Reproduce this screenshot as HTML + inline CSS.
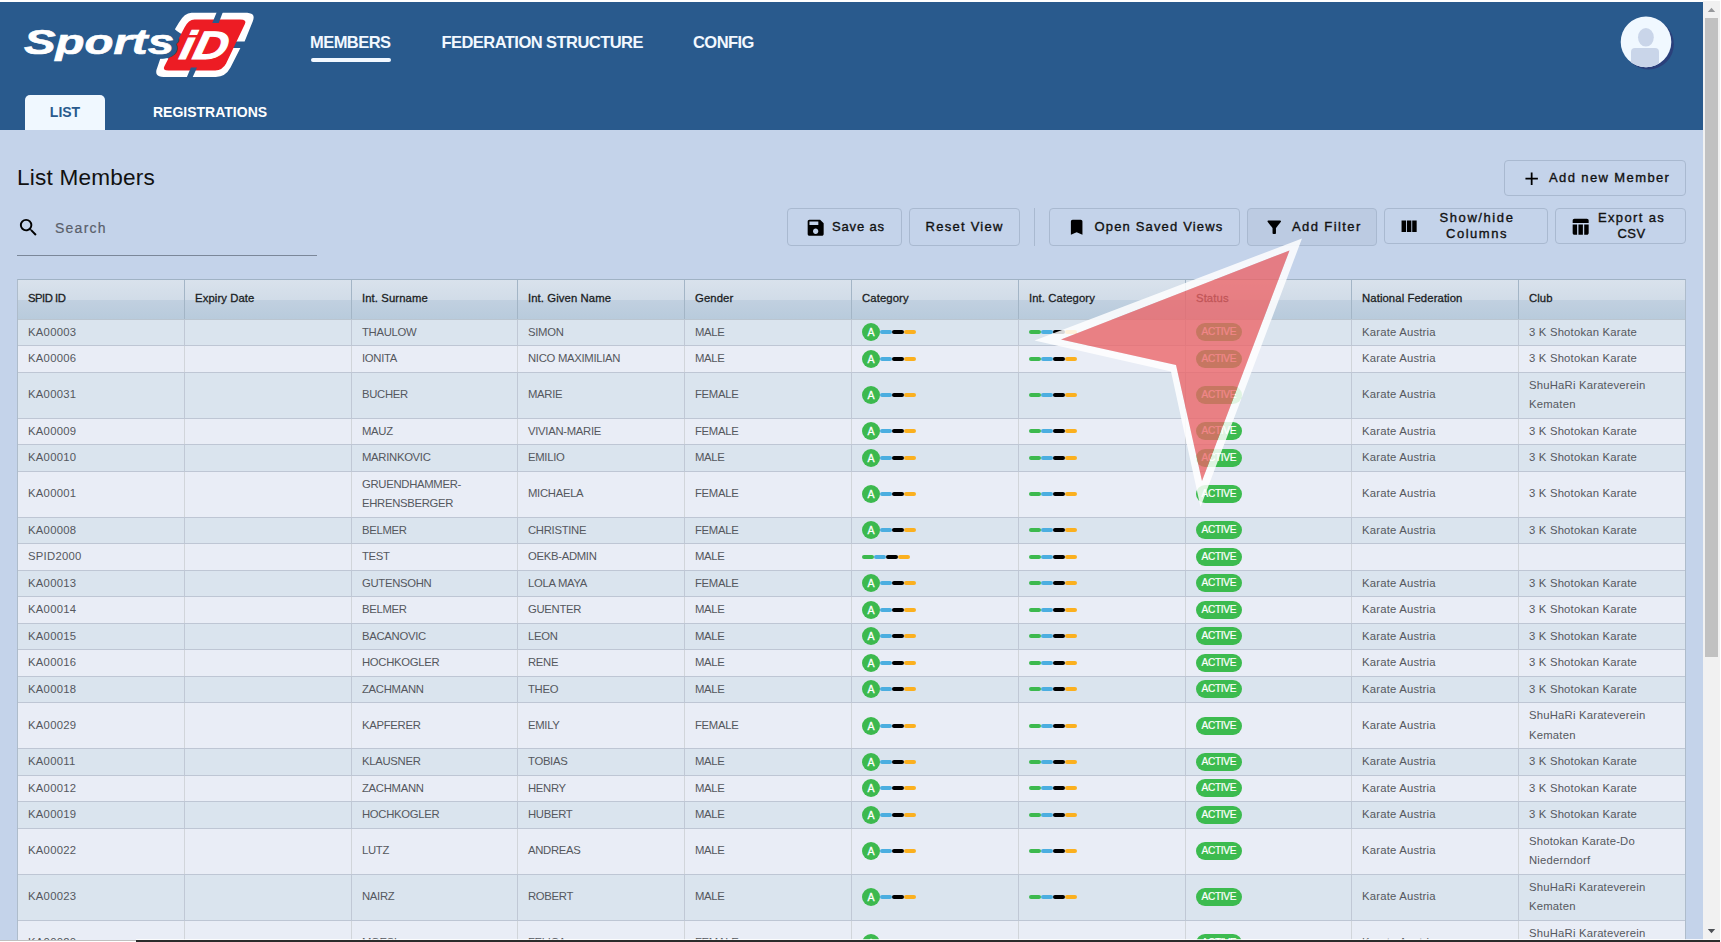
<!DOCTYPE html>
<html lang="en">
<head>
<meta charset="utf-8">
<title>List Members</title>
<style>
*{box-sizing:border-box}
html,body{margin:0;padding:0}
body{width:1721px;height:942px;overflow:hidden;position:relative;background:#c4d3ea;font-family:"Liberation Sans",sans-serif;color:#111}
.abs{position:absolute}
#topline{left:0;top:0;width:1721px;height:2px;background:#fff}
#hdr{left:0;top:2px;width:1703px;height:128px;background:#295a8d}
.nav{position:absolute;top:32px;height:20px;line-height:20px;color:#f2f8ff;font-weight:bold;font-size:16.5px;letter-spacing:-.55px;white-space:nowrap}
#ul{left:311px;top:58px;width:80px;height:4px;border-radius:2px;background:#f2f8ff}
#tab{left:25px;top:95px;width:80px;height:35px;background:#f0f8ff;border-radius:5px 5px 0 0;color:#295a8d;font-weight:bold;font-size:14px;text-align:center;line-height:35px}
#tab2{left:153px;top:95px;height:35px;line-height:35px;color:#fff;font-weight:bold;font-size:14px;white-space:nowrap}
#title{left:17px;top:161px;font-size:22.6px;line-height:34px;color:#111;letter-spacing:.2px;white-space:nowrap}
#search{left:55px;top:218px;font-size:14px;line-height:20px;color:#5a606a;letter-spacing:1.25px;-webkit-text-stroke:.2px #5a606a}
#sline{left:17px;top:255px;width:300px;height:1px;background:#7b8799}
.btn{position:absolute;border:1px solid #a9b9d0;border-radius:4px;color:#111;font-weight:normal;font-size:13px;white-space:nowrap;-webkit-text-stroke:.35px #111}
.btn b{font-weight:normal}
.btn span{position:absolute;display:block;text-align:center}
.btn svg{position:absolute}
#div1{left:1034px;top:208px;width:1px;height:38px;background:#a9b9d0}
/* table */
#tbl{left:17px;top:279px;width:1669px;height:700px;border:1px solid #aebccb;border-top-color:#a0b2c4;background:#e9edf6;overflow:hidden}
#thead{position:absolute;left:0;top:0;width:1667px;height:40px;border-bottom:1px solid #bac5d0;background:linear-gradient(#d9e2ec 0,#d1dce8 52%,#c1d0e0 52%,#b8cbdc 100%)}
.r{position:absolute;left:0;width:1667px;border-bottom:1px solid #bec6d4}
.r.o{background:#dae4ee}
.r.e{background:#e9edf6}
.c{position:absolute;top:0;height:100%;display:flex;align-items:center;padding-left:10px;border-left:1px solid #c0c8d5;font-size:11.3px;line-height:19.5px;color:#55585e;white-space:nowrap}
.r.s .c{padding-bottom:2px}
.r.s26 .c.d,.r.s26 .c.u,.r.s26 .c.m{padding-bottom:0}
.r.e .c{border-left-color:#d1d5da}
.tl{line-height:19px;position:relative;top:.5px}
.tl2{line-height:20px;position:relative;top:-.5px}
.c.u{letter-spacing:-.3px}.c.m{letter-spacing:.2px}.c.d{letter-spacing:.27px}
.c.h{font-size:11.3px;color:#1b1e24;height:39px;padding-bottom:1px;border-left-color:#a3b5c6;letter-spacing:.1px;-webkit-text-stroke:.3px #1b1e24}
.c.h0{letter-spacing:-.5px}
.vl{position:absolute;top:0;width:1px;height:700px;background:#b9c4d1}
.cat{display:flex;align-items:center}
.cat i{display:block;font-style:normal}
.ca{width:18px;height:18px;border-radius:9px;background:#3cb94e;color:#fff;font-size:10.5px;line-height:18px;text-align:center;-webkit-text-stroke:.3px #fff}
.b{width:12px;height:4px;border-radius:2px}
.gr{background:#3cb94e}.bl{background:#4baee0}.bk{background:#000}.or{background:#fbb01f}
.act{display:block;width:46px;height:18px;border-radius:9px;background:#3cbb4f;color:#fff;font-size:10.1px;line-height:17px;text-align:center;-webkit-text-stroke:.2px #fff;letter-spacing:-.3px;text-indent:-.3px}
/* scrollbar */
#sb{left:1703px;top:1px;width:17px;height:939px;background:#f1f1f1}
#sbr{left:1720px;top:0;width:1px;height:942px;background:#fff}
#thumb{left:1705px;top:18px;width:13px;height:639px;background:#c1c1c1}
#bot1{left:0;top:940px;width:136px;height:1px;background:#c0c0c0}
#bot2{left:0;top:941px;width:136px;height:1px;background:#fff}
#bot3{left:136px;top:940px;width:1584px;height:2px;background:#2b2b2b}
#bot4{left:136px;top:939px;width:1584px;height:1px;background:rgba(255,255,255,.8)}
</style>
</head>
<body>
<div class="abs" id="hdr"></div>
<div class="abs" id="topline"></div>

<!-- LOGO -->
<svg class="abs" style="left:0;top:2px" width="300" height="92" viewBox="0 2 300 92">
  <path fill="#fff" d="M174.900,29.300 L178.800,22.700 Q184.500,13 191.500,12.800 L244.500,12.800 C252.500,12.800 255.400,14.800 252.700,21.500 L244.600,41.600 L230,41.600 L187,36 Q179.500,34 174.900,29.300 Z"/>
  <path fill="#fff" d="M161.500,55 L157.300,67.500 Q153.400,76.900 163.500,76.900 L215.800,76.900 Q225.500,76.900 230.500,67.500 L240.400,48 L228,48 L222,62 L171,60 Z"/>
  <path fill="#ed1c24" d="M194.500,19.400 L240.100,19.400 Q247.200,19.400 244.900,24 L226.100,63.600 Q222.500,70.400 215.200,70.400 L168.500,70.400 Q162.100,70.400 164.400,66.200 L184.500,27.500 Q188.500,19.400 194.500,19.400 Z"/>
  <polygon fill="#295a8d" points="217.200,11 223.300,11 218.700,23 212.300,23"/>
  <polygon fill="#295a8d" points="190.900,67.500 197,67.500 192.300,78 186.500,78"/>
  <text x="24" y="54" font-family="'Liberation Sans',sans-serif" font-weight="bold" font-style="italic" font-size="35" textLength="150" lengthAdjust="spacingAndGlyphs" fill="none" stroke="#295a8d" stroke-width="9.500" stroke-linejoin="round">Sports</text>
  <text x="24" y="54" font-family="'Liberation Sans',sans-serif" font-weight="bold" font-style="italic" font-size="35" textLength="150" lengthAdjust="spacingAndGlyphs" fill="#fff" stroke="#fff" stroke-width=".7">Sports</text>
  <text transform="translate(178,59.300) skewX(-13)" font-family="'Liberation Sans',sans-serif" font-weight="bold" font-style="italic" font-size="39.500" textLength="47.500" lengthAdjust="spacingAndGlyphs" fill="#fff" stroke="#fff" stroke-width="1">iD</text>
</svg>

<div class="nav" style="left:310px">MEMBERS</div>
<div class="abs" id="ul"></div>
<div class="nav" style="left:441.5px">FEDERATION STRUCTURE</div>
<div class="nav" style="left:693px">CONFIG</div>

<!-- avatar -->
<svg class="abs" style="left:1610px;top:8px" width="72" height="72" viewBox="1610 8 72 72">
  <defs><clipPath id="avc"><circle cx="1646" cy="41.900" r="25.300"/></clipPath></defs>
  <circle cx="1648.6" cy="44.200" r="25.300" fill="#2a3c78" opacity=".85"/>
  <circle cx="1646" cy="41.900" r="25.300" fill="#f0f8ff"/>
  <g clip-path="url(#avc)" fill="#c9d5e9">
    <ellipse cx="1645.9" cy="37.3" rx="7.9" ry="9.3"/>
    <rect x="1631" y="48" width="28" height="30" rx="4"/>
  </g>
</svg>

<div class="abs" id="tab">LIST</div>
<div class="abs" id="tab2">REGISTRATIONS</div>

<div class="abs" id="title">List Members</div>

<!-- search -->
<svg class="abs" style="left:17.200px;top:216.250px" width="23" height="23" viewBox="0 0 24 24"><path fill="#000" d="M15.5 14h-.79l-.28-.27A6.471 6.471 0 0 0 16 9.5 6.5 6.5 0 1 0 9.5 16c1.61 0 3.09-.59 4.23-1.57l.27.28v.79l5 4.99L20.49 19l-4.99-5zm-6 0C7.01 14 5 11.99 5 9.500S7.01 5 9.500 5 14 7.010 14 9.500 11.990 14 9.500 14z"/></svg>
<div class="abs" id="search">Search</div>
<div class="abs" id="sline"></div>

<!-- buttons -->
<div class="btn" style="left:1504px;top:160px;width:182px;height:36px">
  <svg style="left:16px;top:6.500px" width="21.33" height="21.33" viewBox="0 0 24 24"><path fill="#000" d="M19 13h-6v6h-2v-6H5v-2h6V5h2v6h6v2z"/></svg>
  <span style="left:44px;top:0;line-height:34px;letter-spacing:1.39px">Add new Member</span>
</div>
<div class="btn" style="left:787px;top:208px;width:115px;height:38px">
  <svg style="left:16.500px;top:7.500px" width="21.33" height="21.33" viewBox="0 0 24 24"><path fill="#000" d="M17 3H5c-1.110 0-2 .9-2 2v14c0 1.100.890 2 2 2h14c1.100 0 2-.9 2-2V7l-4-4zm-5 16c-1.660 0-3-1.340-3-3s1.340-3 3-3 3 1.340 3 3-1.340 3-3 3zm3-10H5V5h10v4z"/></svg>
  <span style="left:44px;top:0;line-height:36px;letter-spacing:.85px">Save as</span>
</div>
<div class="btn" style="left:909px;top:208px;width:111px;height:38px">
  <span style="left:15.500px;top:0;line-height:36px;letter-spacing:1.26px">Reset View</span>
</div>
<div class="abs" id="div1"></div>
<div class="btn" style="left:1049px;top:208px;width:191px;height:38px">
  <svg style="left:16px;top:7.500px" width="21.33" height="21.33" viewBox="0 0 24 24"><path fill="#000" d="M16.500 3h-9c-1.100 0-2 .9-2 2v15l6.500-2.800 6.500 2.800V5c0-1.100-.9-2-2-2z"/></svg>
  <span style="left:44.500px;top:0;line-height:36px;letter-spacing:1.16px">Open Saved Views</span>
</div>
<div class="btn" style="left:1247px;top:208px;width:130px;height:38px;background:#bccbe2">
  <svg style="left:15.900px;top:7.500px" width="20.500" height="20.500" viewBox="0 0 24 24"><path fill="#000" d="M4.250 5.610C6.270 8.200 10 13 10 13v6c0 .550.450 1 1 1h2c.550 0 1-.450 1-1v-6s3.720-4.800 5.740-7.390A.998.998 0 0 0 18.950 4H5.040c-.830 0-1.300.950-.790 1.610z"/></svg>
  <span style="left:44px;top:0;line-height:36px;letter-spacing:1.4px">Add Filter</span>
</div>
<div class="btn" style="left:1384px;top:208px;width:164px;height:36px">
  <svg style="left:13.300px;top:6.600px" width="21.33" height="21.33" viewBox="0 0 24 24"><path fill="#000" d="M4 5h5v13H4zM10 5h5v13h-5zM16 5h5v13h-5z"/></svg>
  <span style="left:42px;top:0;width:100px;line-height:16.800px;padding-top:.5px"><b style="letter-spacing:1.58px">Show/hide</b><br><b style="letter-spacing:1.52px">Columns</b></span>
</div>
<div class="btn" style="left:1555px;top:208px;width:131px;height:36px">
  <svg style="left:14px;top:6.500px" width="21.33" height="21.33" viewBox="0 0 24 24"><path fill="#000" d="M5 3h14c1.100 0 2 .9 2 2v3H3V5c0-1.100.9-2 2-2zM3 9.500h5V21H5c-1.100 0-2-.9-2-2zM9.500 9.500h5V21h-5zM16 9.500h5V19c0 1.100-.9 2-2 2h-3z"/></svg>
  <span style="left:25.500px;top:0;width:100px;line-height:16.800px;padding-top:.5px"><b style="letter-spacing:1.36px">Export as</b><br><b style="letter-spacing:.5px">CSV</b></span>
</div>

<!-- table -->
<div class="abs" id="tbl">
<div id="thead"><div class="c h h0" style="left:-1px;width:167px"><span>SPID ID</span></div><div class="c h" style="left:166px;width:167px"><span>Expiry Date</span></div><div class="c h" style="left:333px;width:166px"><span>Int. Surname</span></div><div class="c h" style="left:499px;width:167px"><span>Int. Given Name</span></div><div class="c h" style="left:666px;width:167px"><span>Gender</span></div><div class="c h" style="left:833px;width:167px"><span>Category</span></div><div class="c h" style="left:1000px;width:167px"><span>Int. Category</span></div><div class="c h" style="left:1167px;width:166px"><span>Status</span></div><div class="c h" style="left:1333px;width:167px"><span>National Federation</span></div><div class="c h" style="left:1500px;width:167px"><span>Club</span></div></div>
<div class="r o s s26" style="top:40px;height:26px"><div class="c d" style="left:-1px;width:167px"><span>KA00003</span></div><div class="c " style="left:166px;width:167px"></div><div class="c u" style="left:333px;width:166px"><span>THAULOW</span></div><div class="c u" style="left:499px;width:167px"><span>SIMON</span></div><div class="c u" style="left:666px;width:167px"><span>MALE</span></div><div class="c " style="left:833px;width:167px"><span class="cat"><i class="ca">A</i><i class="b bl"></i><i class="b bk"></i><i class="b or"></i></span></div><div class="c " style="left:1000px;width:167px"><span class="cat"><i class="b gr"></i><i class="b bl"></i><i class="b bk"></i><i class="b or"></i></span></div><div class="c " style="left:1167px;width:166px"><span class="act">ACTIVE</span></div><div class="c m" style="left:1333px;width:167px"><span>Karate Austria</span></div><div class="c m" style="left:1500px;width:167px"><span>3 K Shotokan Karate</span></div></div>
<div class="r e" style="top:66px;height:27px"><div class="c d" style="left:-1px;width:167px"><span>KA00006</span></div><div class="c " style="left:166px;width:167px"></div><div class="c u" style="left:333px;width:166px"><span>IONITA</span></div><div class="c u" style="left:499px;width:167px"><span>NICO MAXIMILIAN</span></div><div class="c u" style="left:666px;width:167px"><span>MALE</span></div><div class="c " style="left:833px;width:167px"><span class="cat"><i class="ca">A</i><i class="b bl"></i><i class="b bk"></i><i class="b or"></i></span></div><div class="c " style="left:1000px;width:167px"><span class="cat"><i class="b gr"></i><i class="b bl"></i><i class="b bk"></i><i class="b or"></i></span></div><div class="c " style="left:1167px;width:166px"><span class="act">ACTIVE</span></div><div class="c m" style="left:1333px;width:167px"><span>Karate Austria</span></div><div class="c m" style="left:1500px;width:167px"><span>3 K Shotokan Karate</span></div></div>
<div class="r o s" style="top:93px;height:46px"><div class="c d" style="left:-1px;width:167px"><span>KA00031</span></div><div class="c " style="left:166px;width:167px"></div><div class="c u" style="left:333px;width:166px"><span>BUCHER</span></div><div class="c u" style="left:499px;width:167px"><span>MARIE</span></div><div class="c u" style="left:666px;width:167px"><span>FEMALE</span></div><div class="c " style="left:833px;width:167px"><span class="cat"><i class="ca">A</i><i class="b bl"></i><i class="b bk"></i><i class="b or"></i></span></div><div class="c " style="left:1000px;width:167px"><span class="cat"><i class="b gr"></i><i class="b bl"></i><i class="b bk"></i><i class="b or"></i></span></div><div class="c " style="left:1167px;width:166px"><span class="act">ACTIVE</span></div><div class="c m" style="left:1333px;width:167px"><span>Karate Austria</span></div><div class="c m" style="left:1500px;width:167px"><span class=tl>ShuHaRi Karateverein<br>Kematen</span></div></div>
<div class="r e s s26" style="top:139px;height:26px"><div class="c d" style="left:-1px;width:167px"><span>KA00009</span></div><div class="c " style="left:166px;width:167px"></div><div class="c u" style="left:333px;width:166px"><span>MAUZ</span></div><div class="c u" style="left:499px;width:167px"><span>VIVIAN-MARIE</span></div><div class="c u" style="left:666px;width:167px"><span>FEMALE</span></div><div class="c " style="left:833px;width:167px"><span class="cat"><i class="ca">A</i><i class="b bl"></i><i class="b bk"></i><i class="b or"></i></span></div><div class="c " style="left:1000px;width:167px"><span class="cat"><i class="b gr"></i><i class="b bl"></i><i class="b bk"></i><i class="b or"></i></span></div><div class="c " style="left:1167px;width:166px"><span class="act">ACTIVE</span></div><div class="c m" style="left:1333px;width:167px"><span>Karate Austria</span></div><div class="c m" style="left:1500px;width:167px"><span>3 K Shotokan Karate</span></div></div>
<div class="r o" style="top:165px;height:27px"><div class="c d" style="left:-1px;width:167px"><span>KA00010</span></div><div class="c " style="left:166px;width:167px"></div><div class="c u" style="left:333px;width:166px"><span>MARINKOVIC</span></div><div class="c u" style="left:499px;width:167px"><span>EMILIO</span></div><div class="c u" style="left:666px;width:167px"><span>MALE</span></div><div class="c " style="left:833px;width:167px"><span class="cat"><i class="ca">A</i><i class="b bl"></i><i class="b bk"></i><i class="b or"></i></span></div><div class="c " style="left:1000px;width:167px"><span class="cat"><i class="b gr"></i><i class="b bl"></i><i class="b bk"></i><i class="b or"></i></span></div><div class="c " style="left:1167px;width:166px"><span class="act">ACTIVE</span></div><div class="c m" style="left:1333px;width:167px"><span>Karate Austria</span></div><div class="c m" style="left:1500px;width:167px"><span>3 K Shotokan Karate</span></div></div>
<div class="r e s" style="top:192px;height:46px"><div class="c d" style="left:-1px;width:167px"><span>KA00001</span></div><div class="c " style="left:166px;width:167px"></div><div class="c u" style="left:333px;width:166px"><span class=tl>GRUENDHAMMER-<br>EHRENSBERGER</span></div><div class="c u" style="left:499px;width:167px"><span>MICHAELA</span></div><div class="c u" style="left:666px;width:167px"><span>FEMALE</span></div><div class="c " style="left:833px;width:167px"><span class="cat"><i class="ca">A</i><i class="b bl"></i><i class="b bk"></i><i class="b or"></i></span></div><div class="c " style="left:1000px;width:167px"><span class="cat"><i class="b gr"></i><i class="b bl"></i><i class="b bk"></i><i class="b or"></i></span></div><div class="c " style="left:1167px;width:166px"><span class="act">ACTIVE</span></div><div class="c m" style="left:1333px;width:167px"><span>Karate Austria</span></div><div class="c m" style="left:1500px;width:167px"><span>3 K Shotokan Karate</span></div></div>
<div class="r o s s26" style="top:238px;height:26px"><div class="c d" style="left:-1px;width:167px"><span>KA00008</span></div><div class="c " style="left:166px;width:167px"></div><div class="c u" style="left:333px;width:166px"><span>BELMER</span></div><div class="c u" style="left:499px;width:167px"><span>CHRISTINE</span></div><div class="c u" style="left:666px;width:167px"><span>FEMALE</span></div><div class="c " style="left:833px;width:167px"><span class="cat"><i class="ca">A</i><i class="b bl"></i><i class="b bk"></i><i class="b or"></i></span></div><div class="c " style="left:1000px;width:167px"><span class="cat"><i class="b gr"></i><i class="b bl"></i><i class="b bk"></i><i class="b or"></i></span></div><div class="c " style="left:1167px;width:166px"><span class="act">ACTIVE</span></div><div class="c m" style="left:1333px;width:167px"><span>Karate Austria</span></div><div class="c m" style="left:1500px;width:167px"><span>3 K Shotokan Karate</span></div></div>
<div class="r e" style="top:264px;height:27px"><div class="c d" style="left:-1px;width:167px"><span>SPID2000</span></div><div class="c " style="left:166px;width:167px"></div><div class="c u" style="left:333px;width:166px"><span>TEST</span></div><div class="c u" style="left:499px;width:167px"><span>OEKB-ADMIN</span></div><div class="c u" style="left:666px;width:167px"><span>MALE</span></div><div class="c " style="left:833px;width:167px"><span class="cat"><i class="b gr"></i><i class="b bl"></i><i class="b bk"></i><i class="b or"></i></span></div><div class="c " style="left:1000px;width:167px"><span class="cat"><i class="b gr"></i><i class="b bl"></i><i class="b bk"></i><i class="b or"></i></span></div><div class="c " style="left:1167px;width:166px"><span class="act">ACTIVE</span></div><div class="c m" style="left:1333px;width:167px"><span></span></div><div class="c m" style="left:1500px;width:167px"><span></span></div></div>
<div class="r o s s26" style="top:291px;height:26px"><div class="c d" style="left:-1px;width:167px"><span>KA00013</span></div><div class="c " style="left:166px;width:167px"></div><div class="c u" style="left:333px;width:166px"><span>GUTENSOHN</span></div><div class="c u" style="left:499px;width:167px"><span>LOLA MAYA</span></div><div class="c u" style="left:666px;width:167px"><span>FEMALE</span></div><div class="c " style="left:833px;width:167px"><span class="cat"><i class="ca">A</i><i class="b bl"></i><i class="b bk"></i><i class="b or"></i></span></div><div class="c " style="left:1000px;width:167px"><span class="cat"><i class="b gr"></i><i class="b bl"></i><i class="b bk"></i><i class="b or"></i></span></div><div class="c " style="left:1167px;width:166px"><span class="act">ACTIVE</span></div><div class="c m" style="left:1333px;width:167px"><span>Karate Austria</span></div><div class="c m" style="left:1500px;width:167px"><span>3 K Shotokan Karate</span></div></div>
<div class="r e" style="top:317px;height:27px"><div class="c d" style="left:-1px;width:167px"><span>KA00014</span></div><div class="c " style="left:166px;width:167px"></div><div class="c u" style="left:333px;width:166px"><span>BELMER</span></div><div class="c u" style="left:499px;width:167px"><span>GUENTER</span></div><div class="c u" style="left:666px;width:167px"><span>MALE</span></div><div class="c " style="left:833px;width:167px"><span class="cat"><i class="ca">A</i><i class="b bl"></i><i class="b bk"></i><i class="b or"></i></span></div><div class="c " style="left:1000px;width:167px"><span class="cat"><i class="b gr"></i><i class="b bl"></i><i class="b bk"></i><i class="b or"></i></span></div><div class="c " style="left:1167px;width:166px"><span class="act">ACTIVE</span></div><div class="c m" style="left:1333px;width:167px"><span>Karate Austria</span></div><div class="c m" style="left:1500px;width:167px"><span>3 K Shotokan Karate</span></div></div>
<div class="r o s s26" style="top:344px;height:26px"><div class="c d" style="left:-1px;width:167px"><span>KA00015</span></div><div class="c " style="left:166px;width:167px"></div><div class="c u" style="left:333px;width:166px"><span>BACANOVIC</span></div><div class="c u" style="left:499px;width:167px"><span>LEON</span></div><div class="c u" style="left:666px;width:167px"><span>MALE</span></div><div class="c " style="left:833px;width:167px"><span class="cat"><i class="ca">A</i><i class="b bl"></i><i class="b bk"></i><i class="b or"></i></span></div><div class="c " style="left:1000px;width:167px"><span class="cat"><i class="b gr"></i><i class="b bl"></i><i class="b bk"></i><i class="b or"></i></span></div><div class="c " style="left:1167px;width:166px"><span class="act">ACTIVE</span></div><div class="c m" style="left:1333px;width:167px"><span>Karate Austria</span></div><div class="c m" style="left:1500px;width:167px"><span>3 K Shotokan Karate</span></div></div>
<div class="r e" style="top:370px;height:27px"><div class="c d" style="left:-1px;width:167px"><span>KA00016</span></div><div class="c " style="left:166px;width:167px"></div><div class="c u" style="left:333px;width:166px"><span>HOCHKOGLER</span></div><div class="c u" style="left:499px;width:167px"><span>RENE</span></div><div class="c u" style="left:666px;width:167px"><span>MALE</span></div><div class="c " style="left:833px;width:167px"><span class="cat"><i class="ca">A</i><i class="b bl"></i><i class="b bk"></i><i class="b or"></i></span></div><div class="c " style="left:1000px;width:167px"><span class="cat"><i class="b gr"></i><i class="b bl"></i><i class="b bk"></i><i class="b or"></i></span></div><div class="c " style="left:1167px;width:166px"><span class="act">ACTIVE</span></div><div class="c m" style="left:1333px;width:167px"><span>Karate Austria</span></div><div class="c m" style="left:1500px;width:167px"><span>3 K Shotokan Karate</span></div></div>
<div class="r o s s26" style="top:397px;height:26px"><div class="c d" style="left:-1px;width:167px"><span>KA00018</span></div><div class="c " style="left:166px;width:167px"></div><div class="c u" style="left:333px;width:166px"><span>ZACHMANN</span></div><div class="c u" style="left:499px;width:167px"><span>THEO</span></div><div class="c u" style="left:666px;width:167px"><span>MALE</span></div><div class="c " style="left:833px;width:167px"><span class="cat"><i class="ca">A</i><i class="b bl"></i><i class="b bk"></i><i class="b or"></i></span></div><div class="c " style="left:1000px;width:167px"><span class="cat"><i class="b gr"></i><i class="b bl"></i><i class="b bk"></i><i class="b or"></i></span></div><div class="c " style="left:1167px;width:166px"><span class="act">ACTIVE</span></div><div class="c m" style="left:1333px;width:167px"><span>Karate Austria</span></div><div class="c m" style="left:1500px;width:167px"><span>3 K Shotokan Karate</span></div></div>
<div class="r e" style="top:423px;height:46px"><div class="c d" style="left:-1px;width:167px"><span>KA00029</span></div><div class="c " style="left:166px;width:167px"></div><div class="c u" style="left:333px;width:166px"><span>KAPFERER</span></div><div class="c u" style="left:499px;width:167px"><span>EMILY</span></div><div class="c u" style="left:666px;width:167px"><span>FEMALE</span></div><div class="c " style="left:833px;width:167px"><span class="cat"><i class="ca">A</i><i class="b bl"></i><i class="b bk"></i><i class="b or"></i></span></div><div class="c " style="left:1000px;width:167px"><span class="cat"><i class="b gr"></i><i class="b bl"></i><i class="b bk"></i><i class="b or"></i></span></div><div class="c " style="left:1167px;width:166px"><span class="act">ACTIVE</span></div><div class="c m" style="left:1333px;width:167px"><span>Karate Austria</span></div><div class="c m" style="left:1500px;width:167px"><span class=tl2>ShuHaRi Karateverein<br>Kematen</span></div></div>
<div class="r o" style="top:469px;height:27px"><div class="c d" style="left:-1px;width:167px"><span>KA00011</span></div><div class="c " style="left:166px;width:167px"></div><div class="c u" style="left:333px;width:166px"><span>KLAUSNER</span></div><div class="c u" style="left:499px;width:167px"><span>TOBIAS</span></div><div class="c u" style="left:666px;width:167px"><span>MALE</span></div><div class="c " style="left:833px;width:167px"><span class="cat"><i class="ca">A</i><i class="b bl"></i><i class="b bk"></i><i class="b or"></i></span></div><div class="c " style="left:1000px;width:167px"><span class="cat"><i class="b gr"></i><i class="b bl"></i><i class="b bk"></i><i class="b or"></i></span></div><div class="c " style="left:1167px;width:166px"><span class="act">ACTIVE</span></div><div class="c m" style="left:1333px;width:167px"><span>Karate Austria</span></div><div class="c m" style="left:1500px;width:167px"><span>3 K Shotokan Karate</span></div></div>
<div class="r e s s26" style="top:496px;height:26px"><div class="c d" style="left:-1px;width:167px"><span>KA00012</span></div><div class="c " style="left:166px;width:167px"></div><div class="c u" style="left:333px;width:166px"><span>ZACHMANN</span></div><div class="c u" style="left:499px;width:167px"><span>HENRY</span></div><div class="c u" style="left:666px;width:167px"><span>MALE</span></div><div class="c " style="left:833px;width:167px"><span class="cat"><i class="ca">A</i><i class="b bl"></i><i class="b bk"></i><i class="b or"></i></span></div><div class="c " style="left:1000px;width:167px"><span class="cat"><i class="b gr"></i><i class="b bl"></i><i class="b bk"></i><i class="b or"></i></span></div><div class="c " style="left:1167px;width:166px"><span class="act">ACTIVE</span></div><div class="c m" style="left:1333px;width:167px"><span>Karate Austria</span></div><div class="c m" style="left:1500px;width:167px"><span>3 K Shotokan Karate</span></div></div>
<div class="r o" style="top:522px;height:27px"><div class="c d" style="left:-1px;width:167px"><span>KA00019</span></div><div class="c " style="left:166px;width:167px"></div><div class="c u" style="left:333px;width:166px"><span>HOCHKOGLER</span></div><div class="c u" style="left:499px;width:167px"><span>HUBERT</span></div><div class="c u" style="left:666px;width:167px"><span>MALE</span></div><div class="c " style="left:833px;width:167px"><span class="cat"><i class="ca">A</i><i class="b bl"></i><i class="b bk"></i><i class="b or"></i></span></div><div class="c " style="left:1000px;width:167px"><span class="cat"><i class="b gr"></i><i class="b bl"></i><i class="b bk"></i><i class="b or"></i></span></div><div class="c " style="left:1167px;width:166px"><span class="act">ACTIVE</span></div><div class="c m" style="left:1333px;width:167px"><span>Karate Austria</span></div><div class="c m" style="left:1500px;width:167px"><span>3 K Shotokan Karate</span></div></div>
<div class="r e s" style="top:549px;height:46px"><div class="c d" style="left:-1px;width:167px"><span>KA00022</span></div><div class="c " style="left:166px;width:167px"></div><div class="c u" style="left:333px;width:166px"><span>LUTZ</span></div><div class="c u" style="left:499px;width:167px"><span>ANDREAS</span></div><div class="c u" style="left:666px;width:167px"><span>MALE</span></div><div class="c " style="left:833px;width:167px"><span class="cat"><i class="ca">A</i><i class="b bl"></i><i class="b bk"></i><i class="b or"></i></span></div><div class="c " style="left:1000px;width:167px"><span class="cat"><i class="b gr"></i><i class="b bl"></i><i class="b bk"></i><i class="b or"></i></span></div><div class="c " style="left:1167px;width:166px"><span class="act">ACTIVE</span></div><div class="c m" style="left:1333px;width:167px"><span>Karate Austria</span></div><div class="c m" style="left:1500px;width:167px"><span class=tl>Shotokan Karate-Do<br>Niederndorf</span></div></div>
<div class="r o s" style="top:595px;height:46px"><div class="c d" style="left:-1px;width:167px"><span>KA00023</span></div><div class="c " style="left:166px;width:167px"></div><div class="c u" style="left:333px;width:166px"><span>NAIRZ</span></div><div class="c u" style="left:499px;width:167px"><span>ROBERT</span></div><div class="c u" style="left:666px;width:167px"><span>MALE</span></div><div class="c " style="left:833px;width:167px"><span class="cat"><i class="ca">A</i><i class="b bl"></i><i class="b bk"></i><i class="b or"></i></span></div><div class="c " style="left:1000px;width:167px"><span class="cat"><i class="b gr"></i><i class="b bl"></i><i class="b bk"></i><i class="b or"></i></span></div><div class="c " style="left:1167px;width:166px"><span class="act">ACTIVE</span></div><div class="c m" style="left:1333px;width:167px"><span>Karate Austria</span></div><div class="c m" style="left:1500px;width:167px"><span class=tl>ShuHaRi Karateverein<br>Kematen</span></div></div>
<div class="r e s" style="top:641px;height:46px"><div class="c d" style="left:-1px;width:167px"><span>KA00020</span></div><div class="c " style="left:166px;width:167px"></div><div class="c u" style="left:333px;width:166px"><span>MOESL</span></div><div class="c u" style="left:499px;width:167px"><span>FELICA</span></div><div class="c u" style="left:666px;width:167px"><span>FEMALE</span></div><div class="c " style="left:833px;width:167px"><span class="cat"><i class="ca">A</i><i class="b bl"></i><i class="b bk"></i><i class="b or"></i></span></div><div class="c " style="left:1000px;width:167px"><span class="cat"><i class="b gr"></i><i class="b bl"></i><i class="b bk"></i><i class="b or"></i></span></div><div class="c " style="left:1167px;width:166px"><span class="act">ACTIVE</span></div><div class="c m" style="left:1333px;width:167px"><span>Karate Austria</span></div><div class="c m" style="left:1500px;width:167px"><span class=tl>ShuHaRi Karateverein<br>Kematen</span></div></div>

</div>

<!-- arrow overlay -->
<svg class="abs" style="left:1000px;top:220px" width="340" height="300" viewBox="1000 220 340 300">
  <path fill="#fff" fill-opacity=".84" fill-rule="evenodd" d="M1302,238.500 L1034.500,340.500 L1171,371.500 L1200.500,507 Z M1289.500,250.500 L1061,339.500 L1176,365 L1202,481 Z"/>
  <polygon points="1289.500,250.500 1061,339.500 1176,365 1202,481" fill="#ed6467" fill-opacity=".78"/>
</svg>

<!-- scrollbar -->
<div class="abs" id="sb"></div>
<div class="abs" id="sbr"></div>
<div class="abs" id="thumb"></div>
<svg class="abs" style="left:1703px;top:2px" width="17" height="17" viewBox="0 0 17 17"><polygon points="4.800,10 12.200,10 8.500,5.800" fill="#96989b"/></svg>
<svg class="abs" style="left:1703px;top:924px" width="17" height="15" viewBox="0 0 17 15"><polygon points="4.800,5 12.200,5 8.500,9.300" fill="#4d5055"/></svg>
<div class="abs" id="bot1"></div><div class="abs" id="bot2"></div><div class="abs" id="bot3"></div><div class="abs" id="bot4"></div>
</body>
</html>
